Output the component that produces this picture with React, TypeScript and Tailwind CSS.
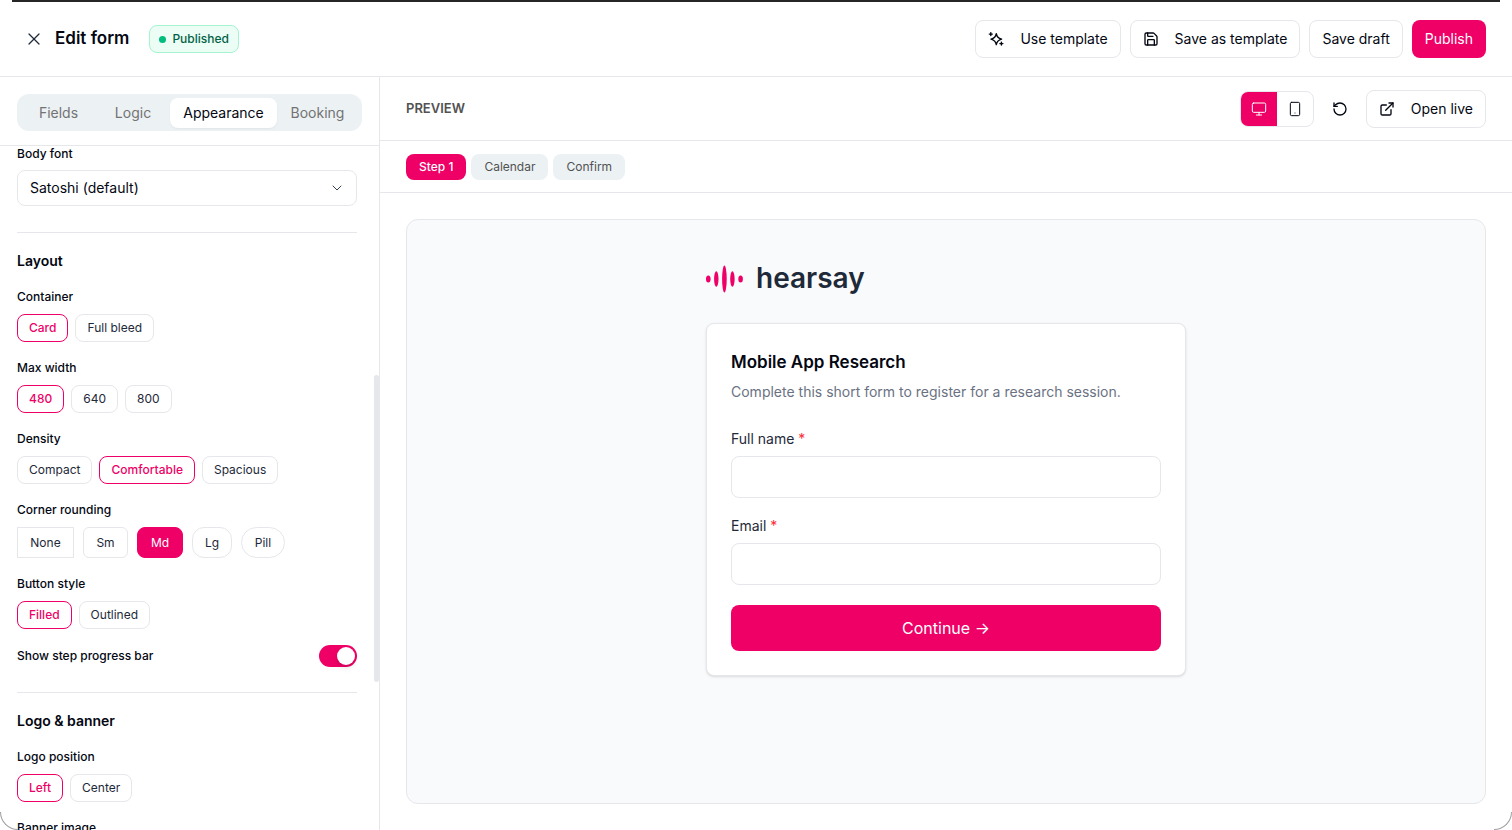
import React, { useState } from "react";
import { ChevronDown, ExternalLink, Monitor, RotateCcw, Save, Smartphone, X } from "lucide-react";

const tabs = ["Fields", "Logic", "Appearance", "Booking"];
const steps = ["Step 1", "Calendar", "Confirm"];

const roundings = [
  { label: "None", className: "w-[57px] rounded-none" },
  { label: "Sm", className: "w-[45px] rounded-md" },
  { label: "Md", className: "w-[46px] rounded-lg" },
  { label: "Lg", className: "w-10 rounded-xl" },
  { label: "Pill", className: "w-11 rounded-full" },
];

const outlineButton =
  "flex items-center rounded-lg border border-gray-200 bg-white px-3 text-sm text-gray-950 whitespace-nowrap";

function SparkleIcon() {
  return (
    <svg viewBox="0 0 16 16" className="size-4" fill="none" stroke="currentColor" strokeWidth="1.4" strokeLinejoin="round" strokeLinecap="round">
      <path d="M8.3 2.6C8.8 5.8 10.2 7.2 13.6 8.1 10.2 9 8.8 10.4 8.3 13.6 7.8 10.4 6.4 9 3 8.1 6.4 7.2 7.8 5.8 8.3 2.6Z" />
      <path d="M2.8 1.6v3M1.3 3.1h3M13.4 11.1v3M11.9 12.6h3" />
    </svg>
  );
}

function Logo() {
  return (
    <div className="flex items-center gap-3">
      <svg viewBox="0 0 38 28" className="mt-0.5 h-7 w-[38px]" fill="#ee0067" aria-hidden="true">
        <ellipse cx="2.3" cy="14" rx="2.3" ry="3.6" />
        <ellipse cx="10.3" cy="14" rx="2.2" ry="7.8" />
        <ellipse cx="18.4" cy="14" rx="2.3" ry="13.6" />
        <ellipse cx="26.4" cy="14" rx="2.2" ry="7.8" />
        <ellipse cx="34.6" cy="14" rx="2.3" ry="3.6" />
      </svg>
      <span className="text-[28px] leading-8 font-semibold text-gray-800">hearsay</span>
    </div>
  );
}

type OptionGroupProps = {
  label: string;
  options: string[];
  initial: string;
};

function OptionGroup({ label, options, initial }: OptionGroupProps) {
  const [value, setValue] = useState(initial);

  return (
    <div role="group" aria-label={label} className="flex flex-col gap-[7px]">
      <span className="text-xs leading-5 font-medium text-gray-950">{label}</span>
      <div className="flex gap-[7px]">
        {options.map((option) => (
          <button
            key={option}
            type="button"
            aria-pressed={option === value}
            onClick={() => setValue(option)}
            className={`h-7 rounded-lg border px-[11px] text-xs ${
              option === value ? "border-[#ee0067] font-medium text-[#ee0067]" : "border-gray-200 text-gray-800"
            }`}
          >
            {option}
          </button>
        ))}
      </div>
    </div>
  );
}

function RoundingGroup() {
  const [value, setValue] = useState("Md");

  return (
    <div role="group" aria-label="Corner rounding" className="flex flex-col gap-[7px]">
      <span className="text-xs leading-5 font-medium text-gray-950">Corner rounding</span>
      <div className="flex gap-[9px]">
        {roundings.map((item) => (
          <button
            key={item.label}
            type="button"
            aria-pressed={item.label === value}
            onClick={() => setValue(item.label)}
            className={`h-[31px] border text-xs ${item.className} ${
              item.label === value ? "border-[#ee0067] bg-[#ee0067] text-white" : "border-gray-200 text-gray-800"
            }`}
          >
            {item.label}
          </button>
        ))}
      </div>
    </div>
  );
}

function Header() {
  return (
    <header className="flex h-[75px] shrink-0 items-center border-b border-gray-200 pr-[26px] pl-6">
      <button type="button" aria-label="Close" className="text-gray-800">
        <X className="size-5" strokeWidth={1.5} />
      </button>
      <h1 className="ml-[11px] text-[17px] font-semibold text-gray-950">Edit form</h1>
      <span className="ml-5 flex h-7 items-center gap-[6px] rounded-lg border border-emerald-200 bg-emerald-50 px-[9px] text-xs font-medium text-emerald-800">
        <span className="size-[7px] rounded-full bg-emerald-500" />
        Published
      </span>
      <div className="ml-auto flex items-center gap-[9px]">
        <button type="button" className={`${outlineButton} h-[38px] gap-4`}>
          <SparkleIcon />
          Use template
        </button>
        <button type="button" className={`${outlineButton} h-[38px] gap-4`}>
          <Save className="size-4" />
          Save as template
        </button>
        <button type="button" className={`${outlineButton} h-[38px]`}>
          Save draft
        </button>
        <button type="button" className="h-[38px] rounded-lg bg-[#ee0067] px-[13px] text-sm text-white">
          Publish
        </button>
      </div>
    </header>
  );
}

function Sidebar() {
  const [activeTab, setActiveTab] = useState("Appearance");
  const [showProgress, setShowProgress] = useState(true);

  return (
    <aside className="relative flex w-[380px] shrink-0 flex-col border-r border-gray-200">
      <div className="shrink-0 border-b border-gray-200 px-[17px] pt-[17px] pb-[14px]">
        <div
          role="tablist"
          className="grid h-[37px] grid-cols-[75fr_74fr_107fr_81fr] items-center rounded-xl bg-[#ecf1f4] p-1"
        >
          {tabs.map((tab) => (
            <button
              key={tab}
              type="button"
              role="tab"
              aria-selected={tab === activeTab}
              onClick={() => setActiveTab(tab)}
              className={`h-[30px] rounded-lg text-sm ${
                tab === activeTab ? "bg-white text-gray-950 shadow-xs" : "text-neutral-500"
              }`}
            >
              {tab}
            </button>
          ))}
        </div>
      </div>

      <div className="min-h-0 flex-1 overflow-hidden pr-[22px] pl-[17px]">
        <div className="flex flex-col gap-2 border-b border-gray-200 pb-[26px]">
          <label htmlFor="body-font" className="text-xs leading-4 font-medium text-gray-950">
            Body font
          </label>
          <div className="grid items-center">
            <select
              id="body-font"
              className="col-start-1 row-start-1 h-9 w-full appearance-none rounded-lg border border-gray-200 bg-white px-3 text-sm text-gray-950"
            >
              <option>Satoshi (default)</option>
            </select>
            <ChevronDown className="pointer-events-none col-start-1 row-start-1 mr-3 size-4 justify-self-end text-gray-700" strokeWidth={1.5} />
          </div>
        </div>

        <section className="flex flex-col gap-4 border-b border-gray-200 pt-[18px] pb-[25px]">
          <h2 className="text-sm leading-5 font-semibold text-gray-950">Layout</h2>
          <OptionGroup label="Container" options={["Card", "Full bleed"]} initial="Card" />
          <OptionGroup label="Max width" options={["480", "640", "800"]} initial="480" />
          <OptionGroup label="Density" options={["Compact", "Comfortable", "Spacious"]} initial="Comfortable" />
          <RoundingGroup />
          <OptionGroup label="Button style" options={["Filled", "Outlined"]} initial="Filled" />
          <label className="flex h-[22px] items-center justify-between text-xs font-medium text-gray-950">
            Show step progress bar
            <input
              type="checkbox"
              role="switch"
              checked={showProgress}
              onChange={(e) => setShowProgress(e.target.checked)}
              className="h-[22px] w-[38px] appearance-none rounded-full bg-gray-300 p-[2px] before:block before:size-[18px] before:rounded-full before:bg-white before:shadow-md checked:bg-[#ee0067] checked:before:ml-auto"
            />
          </label>
        </section>

        <section className="flex flex-col gap-4 pt-[18px]">
          <h2 className="text-sm leading-5 font-semibold text-gray-950">Logo &amp; banner</h2>
          <OptionGroup label="Logo position" options={["Left", "Center"]} initial="Left" />
          <span className="text-xs leading-5 font-medium text-gray-950">Banner image</span>
        </section>
      </div>

      {/* scrollbar thumb */}
      <div className="absolute top-[39.6%] right-0 h-[40.8%] w-[5px] rounded-full bg-gray-200" />
    </aside>
  );
}

function Field({ id, label, type }: { id: string; label: string; type: string }) {
  return (
    <div className="flex flex-col gap-[7px]">
      <label htmlFor={id} className="text-sm leading-5 text-gray-800">
        {label} <span className="text-red-500">*</span>
      </label>
      <input id={id} type={type} className="h-[42px] rounded-lg border border-gray-200 bg-white px-3 text-sm" />
    </div>
  );
}

function Preview() {
  const [device, setDevice] = useState("desktop");
  const [step, setStep] = useState("Step 1");

  const deviceClass = (name: string) =>
    `flex h-full w-9 items-center justify-center ${name === device ? "bg-[#ee0067] text-white" : "text-gray-950"}`;

  return (
    <main className="flex min-w-0 flex-1 flex-col">
      <div className="flex h-16 shrink-0 items-center border-b border-gray-200 px-[26px]">
        <h2 className="text-[13px] font-semibold text-neutral-600">PREVIEW</h2>
        <div className="ml-auto flex items-center">
          <div className="flex h-9 overflow-hidden rounded-lg border border-gray-200">
            <button type="button" aria-label="Desktop" onClick={() => setDevice("desktop")} className={deviceClass("desktop")}>
              <Monitor className="size-4" strokeWidth={1.5} />
            </button>
            <button type="button" aria-label="Mobile" onClick={() => setDevice("mobile")} className={deviceClass("mobile")}>
              <Smartphone className="size-4" strokeWidth={1.5} />
            </button>
          </div>
          <button type="button" aria-label="Reset preview" className="mx-[18px] text-gray-950">
            <RotateCcw className="size-4" />
          </button>
          <a href="#live" className={`${outlineButton} h-[38px] gap-4`}>
            <ExternalLink className="size-4" />
            Open live
          </a>
        </div>
      </div>

      <div className="flex h-[52px] shrink-0 items-center gap-[5px] border-b border-gray-200 px-[26px]">
        {steps.map((name) => (
          <button
            key={name}
            type="button"
            onClick={() => setStep(name)}
            className={`h-[26px] rounded-lg px-[13px] text-xs ${
              name === step ? "bg-[#ee0067] font-medium text-white" : "bg-[#ecf1f4] text-neutral-600"
            }`}
          >
            {name}
          </button>
        ))}
      </div>

      <div className="flex min-h-0 flex-1 p-[26px]">
        <div className="flex flex-1 flex-col items-center rounded-xl border border-gray-200 bg-gray-50 pt-[42px]">
          <div className="flex w-[480px] max-w-full flex-col gap-[29px]">
            <Logo />
            <form
              onSubmit={(e) => e.preventDefault()}
              className="flex flex-col gap-[18px] rounded-lg border border-gray-200 bg-white p-6 shadow-sm"
            >
              <div className="mb-[7px] flex flex-col gap-1">
                <h3 className="text-[17px] leading-7 font-semibold text-gray-950">Mobile App Research</h3>
                <p className="text-sm leading-6 text-gray-500">
                  Complete this short form to register for a research session.
                </p>
              </div>
              <Field id="full-name" label="Full name" type="text" />
              <Field id="email" label="Email" type="email" />
              <button type="submit" className="mt-0.5 h-[46px] rounded-lg bg-[#ee0067] text-base text-white">
                Continue →
              </button>
            </form>
          </div>
        </div>
      </div>
    </main>
  );
}

export default function App() {
  return (
    <div className="relative flex h-screen flex-col overflow-hidden bg-white font-['Inter',sans-serif]">
      <div className="mx-3 h-0.5 shrink-0 bg-neutral-800" />
      <Header />
      <div className="flex min-h-0 flex-1">
        <Sidebar />
        <Preview />
      </div>

      {/* window corners */}
      <div className="pointer-events-none absolute bottom-0 left-0 size-[18px] rounded-bl-[18px] border-b border-l border-neutral-400" />
      <div className="pointer-events-none absolute right-0 bottom-0 size-[18px] rounded-br-[18px] border-r border-b border-neutral-400" />
    </div>
  );
}
